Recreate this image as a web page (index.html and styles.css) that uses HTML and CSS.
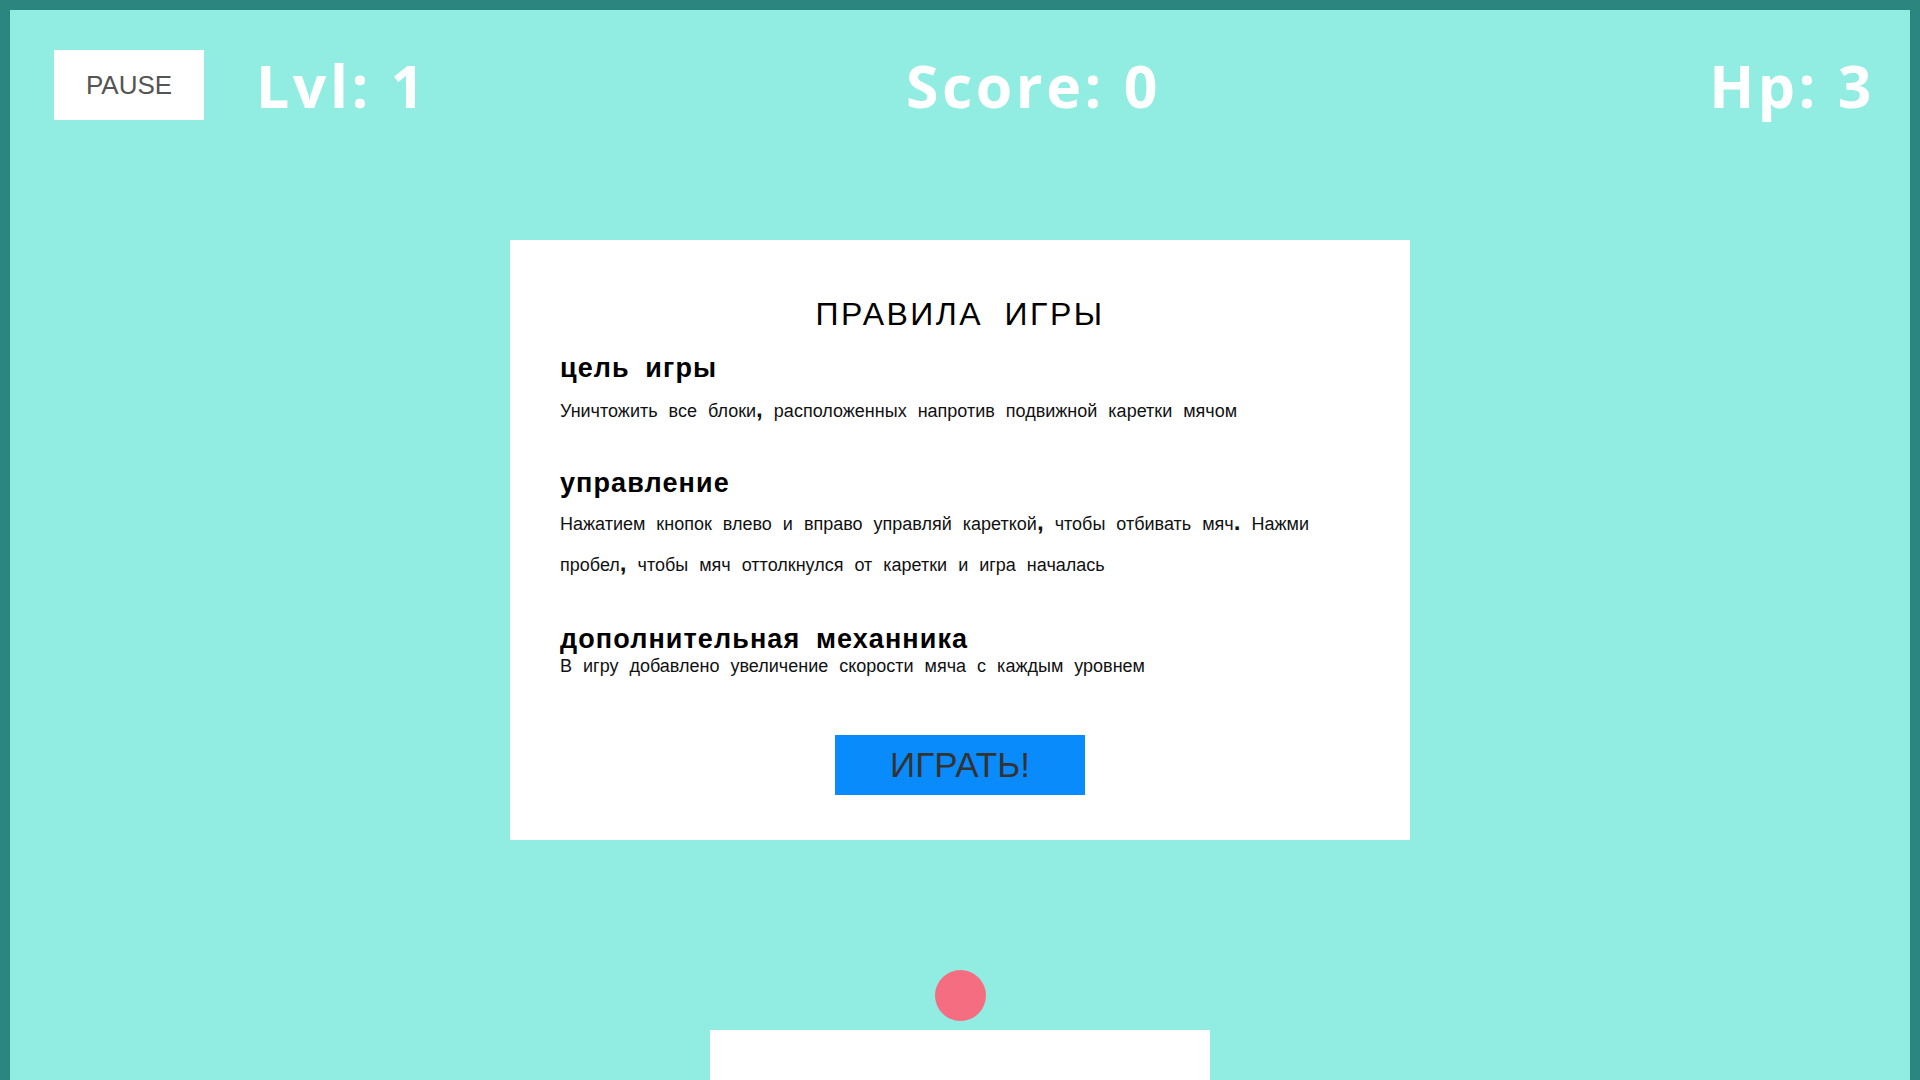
FILE: index.html
```html
<!DOCTYPE html>
<html lang="ru">
<head>
<meta charset="utf-8">
<title>Arkanoid</title>
<link rel="stylesheet" href="styles.css">
</head>
<body>
<div class="game">
  <header class="hud">
    <button class="pause">PAUSE</button>
    <div class="stat lvl">Lvl: 1</div>
    <div class="stat score">Score: 0</div>
    <div class="stat hp">Hp: 3</div>
  </header>
  <section class="card">
    <h1 class="title">ПРАВИЛА ИГРЫ</h1>
    <h2 class="sub sub-first">цель игры</h2>
    <p class="text text-first">Уничтожить все блоки<span class="pn">,</span> расположенных напротив подвижной каретки мячом</p>
    <h2 class="sub sub-second">управление</h2>
    <p class="text text-second">Нажатием кнопок влево и вправо управляй кареткой<span class="pn">,</span> чтобы отбивать мяч<span class="pn">.</span> Нажми пробел<span class="pn">,</span> чтобы мяч оттолкнулся от каретки и игра началась</p>
    <h2 class="sub sub-third">дополнительная механника</h2>
    <p class="text text-third">В игру добавлено увеличение скорости мяча с каждым уровнем</p>
    <button class="play">ИГРАТЬ!</button>
  </section>
  <div class="field">
    <div class="ball"></div>
    <div class="paddle"></div>
  </div>
</div>
</body>
</html>
```

FILE: styles.css
```css
html, body {
  margin: 0;
  padding: 0;
  height: 100%;
  overflow: hidden;
}
body {
  background: #2d857f;
}
.game {
  box-sizing: border-box;
  height: 100vh;
  border: 10px solid #2d857f;
  border-bottom: none;
  background: #91ece2;
  display: flex;
  flex-direction: column;
}
.hud {
  display: flex;
  align-items: center;
  height: 70px;
  padding: 40px 35px 0 44px;
}
.pause {
  width: 150px;
  height: 70px;
  border: none;
  background: #ffffff;
  color: #555555;
  font-family: "Liberation Sans", Arial, sans-serif;
  font-size: 26px;
  padding: 0;
  flex: none;
}
.stat {
  color: #ffffff;
  font-family: "Open Sans", sans-serif;
  font-weight: 700;
  font-size: 59px;
  letter-spacing: 3.5px;
  line-height: 70px;
  white-space: nowrap;
}
.lvl {
  margin-left: 52px;
  width: 650px;
}
.hp {
  margin-left: auto;
}
.card {
  box-sizing: border-box;
  width: 900px;
  height: 600px;
  margin: 120px auto 0;
  background: #ffffff;
  padding: 56px 50px 45px;
  display: flex;
  flex-direction: column;
  font-family: "Liberation Sans", Arial, sans-serif;
  color: #111111;
}
.title {
  margin: 0;
  font-size: 32px;
  line-height: 37px;
  font-weight: 400;
  text-align: center;
  letter-spacing: 2.5px;
  word-spacing: 10px;
  color: #000000;
}
.sub {
  margin: 0;
  font-size: 27px;
  line-height: 32px;
  font-weight: 700;
  letter-spacing: 1.1px;
  word-spacing: 7px;
  color: #000000;
}
.sub-first { margin-top: 19px; }
.sub-second { margin-top: 35px; }
.sub-third { margin-top: 38px; line-height: 30px; }
.text {
  margin: 0;
  font-size: 18px;
  line-height: 41px;
  word-spacing: 6px;
}
.text-first { margin-top: 6px; line-height: 42px; }
.text-second { margin-top: 5px; }
.text-third { margin-top: 0; line-height: 24px; }
.pn {
  font-weight: 700;
  font-size: 1.35em;
  line-height: 0;
}
.play {
  align-self: center;
  margin-top: 57px;
  width: 250px;
  height: 60px;
  border: none;
  padding: 0;
  background: #0a8bfb;
  color: #333333;
  font-family: "Liberation Sans", Arial, sans-serif;
  font-size: 35px;
}
.field {
  display: flex;
  flex-direction: column;
  align-items: center;
}
.ball {
  width: 51px;
  height: 51px;
  border-radius: 50%;
  background: #f56d81;
  margin-top: 130px;
}
.paddle {
  width: 500px;
  height: 60px;
  background: #ffffff;
  margin-top: 9px;
}
```
